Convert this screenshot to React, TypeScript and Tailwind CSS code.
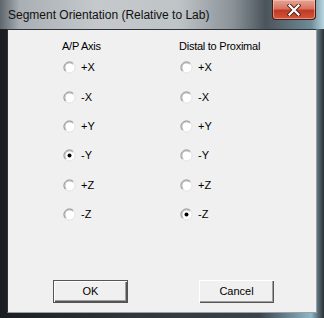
import React from "react";

const axes = ["+X", "-X", "+Y", "-Y", "+Z", "-Z"];

function Radio({ checked }: { checked: boolean }) {
  return (
    <svg width="13" height="13" viewBox="0 0 13 13" className="shrink-0">
      <circle cx="6.5" cy="6.5" r="5.5" fill="#fff" />
      <path d="M2.6 10.4 A5.5 5.5 0 0 1 10.4 2.6" fill="none" stroke="#7e7e7e" strokeWidth="1" />
      <path d="M10.4 2.6 A5.5 5.5 0 0 1 2.6 10.4" fill="none" stroke="#e2e2e2" strokeWidth="1" />
      <path d="M3.3 9.7 A4.5 4.5 0 0 1 9.7 3.3" fill="none" stroke="#bdbdbd" strokeWidth="1" />
      {checked && <circle cx="6.5" cy="6.5" r="2" fill="#000" />}
    </svg>
  );
}

function Column({ title, selected }: { title: string; selected: string }) {
  return (
    <div className="flex w-[117px] flex-col">
      <div className="h-[13px] text-[11px] leading-[13px] tracking-[-0.25px] text-black">{title}</div>
      <div className="flex flex-col">
        {axes.map((a) => (
          <div key={a} className="flex h-[29.4px] items-center gap-[5px] pl-[1px]">
            <Radio checked={a === selected} />
            <span className="text-[11px] leading-[13px] text-black">{a}</span>
          </div>
        ))}
      </div>
    </div>
  );
}

export default function App() {
  return (
    <div
      className="flex h-[318px] w-[324px] flex-col overflow-hidden bg-[linear-gradient(90deg,#1a1e22_0%,#30363b_40%,#3b444b_80%,#8fb7c8_96%,#2a3035_100%)]"
      style={{ fontFamily: '"Liberation Sans", Arial, sans-serif' }}
    >
      {/* Title bar */}
      <div className="flex h-[29px] shrink-0 items-start justify-between bg-[linear-gradient(90deg,#5e666d_0%,#a9afb4_6%,#c5c9cc_30%,#bfc4c7_55%,#8a9298_72%,#4b545b_82%,#6f8a98_96%,#b7d6e2_100%)]">
        <span className="pl-[8px] pt-[7px] text-[12px] leading-[16px] text-[#111]">
          Segment Orientation (Relative to Lab)
        </span>
        <div className="mr-[8px] flex h-[20px] w-[44px] items-center justify-center rounded-b-[4px] border border-t-0 border-[#4a1d16] bg-[linear-gradient(180deg,#e6a595_0%,#d77461_45%,#c23a24_55%,#d0573c_100%)] shadow-[inset_0_0_0_1px_rgba(255,210,200,0.5)]">
          <svg width="14" height="12" viewBox="0 0 14 12">
            <path d="M2.5 1.5 L11.5 10.5 M11.5 1.5 L2.5 10.5" stroke="#4a2018" strokeWidth="4" strokeLinecap="square" />
            <path d="M2.5 1.5 L11.5 10.5 M11.5 1.5 L2.5 10.5" stroke="#fff" strokeWidth="2.2" strokeLinecap="square" />
          </svg>
        </div>
      </div>

      {/* Client area */}
      <div className="flex flex-1 px-[7px] pb-[5px]">
        <div className="flex flex-1 flex-col border border-[#2e3337] border-b-[#9aa0a5] border-r-[#9aa0a5] bg-[#f0f0f0]">
          <div className="flex pl-[54px] pt-[10px]">
            <Column title="A/P Axis" selected="-Y" />
            <Column title="Distal to Proximal" selected="-Z" />
          </div>

          <div className="mt-auto flex gap-[71px] pb-[9px] pl-[45px]">
            <button className="h-[23px] w-[75px] border border-[#555] bg-[#f0f0f0] text-[11px] text-black shadow-[inset_1px_1px_0_#fff,inset_-1px_-1px_0_#555,inset_-2px_-2px_0_#a0a0a0]">
              OK
            </button>
            <button className="h-[23px] w-[75px] bg-[#f0f0f0] text-[11px] text-black shadow-[inset_1px_1px_0_#fff,inset_-1px_-1px_0_#555,inset_-2px_-2px_0_#a0a0a0]">
              Cancel
            </button>
          </div>
        </div>
      </div>
    </div>
  );
}
